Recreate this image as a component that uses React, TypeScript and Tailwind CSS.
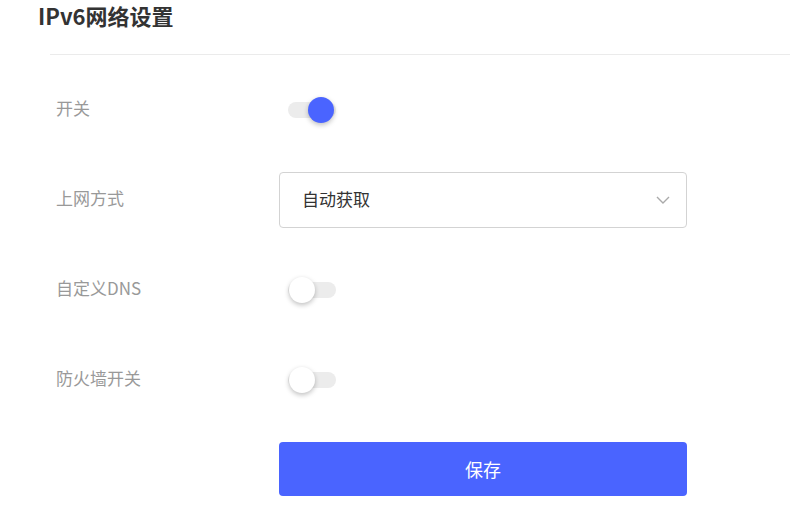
import React, { useState } from 'react';

interface ToggleProps {
  checked: boolean;
  onChange: (v: boolean) => void;
}

const Toggle: React.FC<ToggleProps> = ({ checked, onChange }) => {
  return (
    <button
      type="button"
      onClick={() => onChange(!checked)}
      className="relative w-[48px] h-[16px] rounded-full bg-[#ececec] ml-[9px]"
    >
      <span
        className={
          checked
            ? 'absolute top-[-5px] left-[20px] w-[26px] h-[26px] rounded-full bg-[#4a64ff] shadow-[0_2px_5px_rgba(0,0,0,0.25)]'
            : 'absolute top-[-5px] left-[1px] w-[26px] h-[26px] rounded-full bg-white shadow-[0_2px_5px_rgba(0,0,0,0.25)]'
        }
      />
    </button>
  );
};

const Row: React.FC<{ label: string; children: React.ReactNode }> = ({ label, children }) => (
  <div className="flex items-center h-[56px]">
    <div className="w-[223px] pb-[4px] text-[17px] text-[#999]">{label}</div>
    {children}
  </div>
);

export default function App() {
  const [enabled, setEnabled] = useState(true);
  const [dns, setDns] = useState(false);
  const [firewall, setFirewall] = useState(false);

  return (
    <div
      className="w-[790px] h-[522px] bg-white overflow-hidden"
      style={{ fontFamily: '"Noto Sans CJK SC", "Noto Sans", sans-serif' }}
    >
      <h1 className="pl-[38px] h-[54px] text-[22px] leading-[30px] font-bold text-[#333]">
        IPv6网络设置
      </h1>
      <div className="ml-[50px] border-t border-[#ebebeb] pl-[6px] pt-[27px] flex flex-col gap-[34px]">
        <Row label="开关">
          <Toggle checked={enabled} onChange={setEnabled} />
        </Row>
        <Row label="上网方式">
          <div className="w-[408px] h-[56px] border border-[#d3d3d3] rounded-[4px] flex items-center justify-between pl-[22px] pr-[16px]">
            <span className="text-[17px] text-[#333] pb-[2px]">自动获取</span>
            <svg width="14" height="8" viewBox="0 0 14 8" fill="none">
              <path d="M1 1l6 6 6-6" stroke="#aaa" strokeWidth="1.4" />
            </svg>
          </div>
        </Row>
        <Row label="自定义DNS">
          <Toggle checked={dns} onChange={setDns} />
        </Row>
        <Row label="防火墙开关">
          <Toggle checked={firewall} onChange={setFirewall} />
        </Row>
        <div className="flex h-[54px]">
          <div className="w-[223px]" />
          <button
            type="button"
            className="w-[408px] h-[54px] rounded-[4px] bg-[#4a64ff] text-white text-[18px]"
          >
            保存
          </button>
        </div>
      </div>
    </div>
  );
}
